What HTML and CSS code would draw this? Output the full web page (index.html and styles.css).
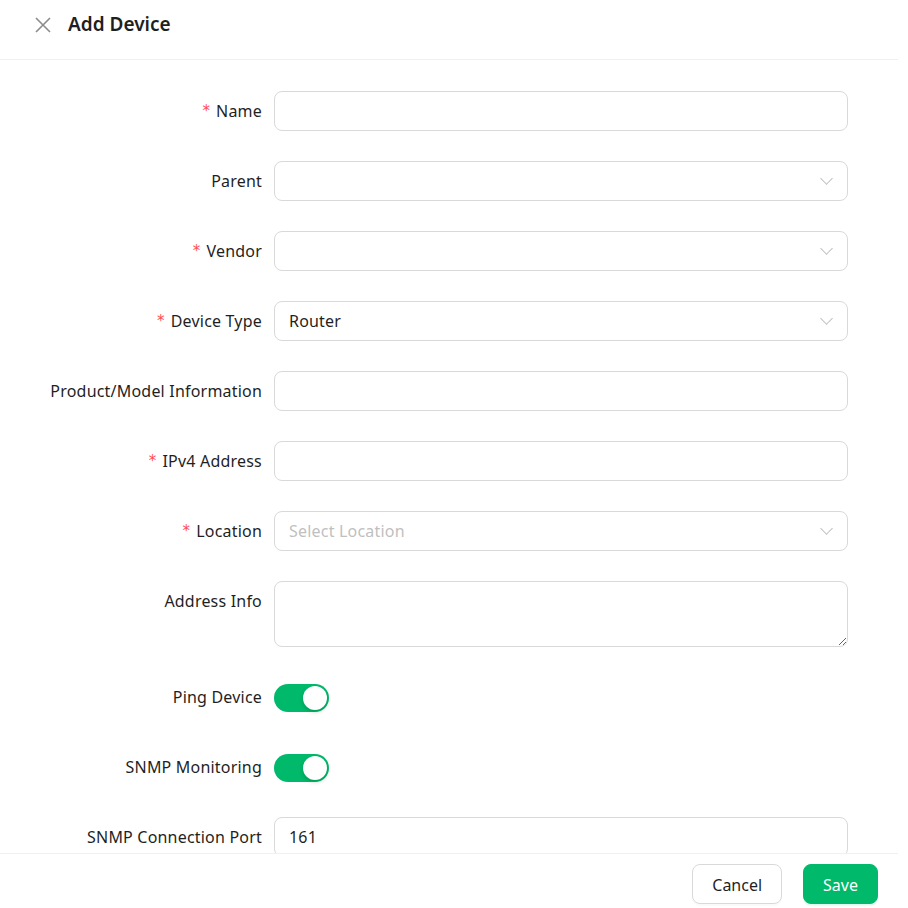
FILE: index.html
```html
<!DOCTYPE html>
<html lang="en">
<head>
    <meta charset="UTF-8">
    <meta name="viewport" content="width=device-width, initial-scale=1.0">
    <title>Add Device</title>
    <link rel="stylesheet" href="styles.css">
</head>
<body>
    <div class="drawer">
        <div class="drawer-header">
            <span class="close">
                <svg width="16" height="16" viewBox="0 0 16 16">
                    <path d="M1 1 L15 15 M15 1 L1 15" stroke="#8c8c8c" stroke-width="1.6" fill="none"/>
                </svg>
            </span>
            <h3>Add Device</h3>
        </div>

        <div class="drawer-body">
            <form class="form">
                <label class="form-label required">Name</label>
                <div class="control"><input class="input" type="text"></div>

                <label class="form-label">Parent</label>
                <div class="control">
                    <div class="select"><span class="select-value"></span><span class="arrow"></span></div>
                </div>

                <label class="form-label required">Vendor</label>
                <div class="control">
                    <div class="select"><span class="select-value"></span><span class="arrow"></span></div>
                </div>

                <label class="form-label required">Device Type</label>
                <div class="control">
                    <div class="select"><span class="select-value">Router</span><span class="arrow"></span></div>
                </div>

                <label class="form-label">Product/Model Information</label>
                <div class="control"><input class="input" type="text"></div>

                <label class="form-label required">IPv4 Address</label>
                <div class="control"><input class="input" type="text"></div>

                <label class="form-label required">Location</label>
                <div class="control">
                    <div class="select"><span class="select-value placeholder">Select Location</span><span class="arrow"></span></div>
                </div>

                <label class="form-label top">Address Info</label>
                <div class="control"><textarea class="textarea"></textarea></div>

                <label class="form-label">Ping Device</label>
                <div class="control"><span class="switch on"><span class="knob"></span></span></div>

                <label class="form-label">SNMP Monitoring</label>
                <div class="control"><span class="switch on"><span class="knob"></span></span></div>

                <label class="form-label">SNMP Connection Port</label>
                <div class="control"><input class="input" type="text" value="161"></div>
            </form>
        </div>

        <div class="drawer-footer">
            <button class="btn" type="button">Cancel</button>
            <button class="btn btn-primary" type="button">Save</button>
        </div>
    </div>
</body>
</html>
```

FILE: styles.css
```css
body {
    margin: 0;
    background-color: #fff;
    font-family: "Noto Sans", "Open Sans", sans-serif;
    color: #1f1f1f;
}
.drawer {
    width: 898px;
    height: 908px;
    display: flex;
    flex-direction: column;
    background-color: #fff;
}
.drawer-header {
    box-sizing: border-box;
    height: 60px;
    border-bottom: 1px solid #f0f0f0;
    display: flex;
    align-items: center;
    padding: 0 0 10px 35px;
    gap: 17px;
}
.drawer-header .close {
    display: flex;
    width: 16px;
    height: 16px;
}
.drawer-header h3 {
    margin: 0;
    font-size: 19px;
    font-weight: 600;
    margin-top: -1px;
}
.drawer-body {
    flex: 1;
    overflow: hidden;
    padding: 31px 50px 0 24px;
}
.form {
    display: grid;
    grid-template-columns: 238px 574px;
    column-gap: 12px;
    row-gap: 30px;
}
.form-label {
    height: 40px;
    display: flex;
    align-items: center;
    justify-content: flex-end;
    font-size: 16px;
    letter-spacing: 0.2px;
    white-space: nowrap;
}
.form-label.top {
    align-self: start;
}
.form-label.required::before {
    content: "*";
    color: #ff4d4f;
    margin-right: 6px;
    font-family: SimSun, "DejaVu Sans", sans-serif;
    font-size: 15px;
}
.control {
    min-height: 40px;
    display: flex;
    align-items: center;
}
.input, .select, .textarea {
    box-sizing: border-box;
    width: 100%;
    height: 40px;
    border: 1px solid #d9d9d9;
    border-radius: 8px;
    padding: 0 14px;
    font-family: inherit;
    font-size: 16px;
    letter-spacing: 0.2px;
    color: #1f1f1f;
    background-color: #fff;
    outline: none;
}
.select {
    display: flex;
    align-items: center;
    justify-content: space-between;
}
.select-value.placeholder {
    color: #bfbfbf;
}
.arrow {
    width: 8px;
    height: 8px;
    border-right: 1.2px solid #bfbfbf;
    border-bottom: 1.2px solid #bfbfbf;
    transform: rotate(45deg);
    margin-top: -5px;
    margin-right: 2px;
}
.textarea {
    height: 66px;
    padding: 8px 14px;
    resize: vertical;
}
.switch {
    position: relative;
    display: inline-block;
    width: 55px;
    height: 28px;
    margin-top: 1px;
    border-radius: 14px;
    background-color: #00b96b;
}
.switch .knob {
    position: absolute;
    top: 2px;
    left: 29px;
    width: 24px;
    height: 24px;
    border-radius: 50%;
    background-color: #fff;
    box-shadow: 0 2px 4px 0 rgba(0, 35, 11, 0.2);
}
.drawer-footer {
    box-sizing: border-box;
    height: 55px;
    border-top: 1px solid #f0f0f0;
    display: flex;
    justify-content: flex-end;
    align-items: flex-start;
    gap: 21px;
    padding: 10px 20px 0 0;
}
.btn {
    height: 40px;
    padding: 2px 19px 0;
    border: 1px solid #d9d9d9;
    border-radius: 8px;
    background-color: #fff;
    font-family: inherit;
    font-size: 16px;
    color: #1f1f1f;
    cursor: pointer;
    box-shadow: 0 2px 0 rgba(0, 0, 0, 0.02);
}
.btn-primary {
    background-color: #00b96b;
    border-color: #00b96b;
    color: #fff;
    box-shadow: 0 2px 0 rgba(5, 255, 130, 0.1);
}
```
